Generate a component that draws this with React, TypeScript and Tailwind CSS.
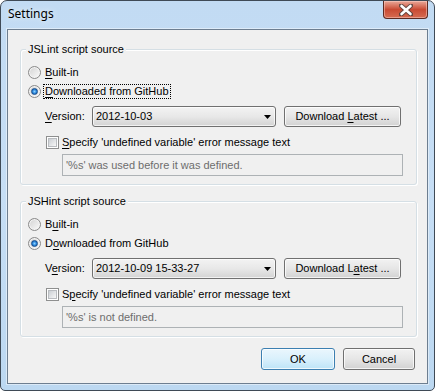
import type { ReactNode } from "react";

const font = "font-['Liberation_Sans',Arial,sans-serif] text-[11px] text-black";

const Radio = ({ checked }: { checked?: boolean }) => (
  <span className="flex h-[13px] w-[13px] shrink-0 items-center justify-center rounded-full border border-[#8a8a8a] bg-linear-to-br from-[#d2d2d2] to-[#fbfbfb] shadow-[inset_0_0_0_1px_#f4f4f4]">
    {checked && (
      <span className="h-[7px] w-[7px] rounded-full border border-[#1a4e8c] bg-radial from-[#8fd3fb] via-[#2a8ae0] to-[#0c4a95]" />
    )}
  </span>
);

const Checkbox = () => (
  <span className="flex h-[13px] w-[13px] shrink-0 items-center justify-center border border-[#8e8f8f] bg-white">
    <span className="h-[9px] w-[9px] border border-[#b9bcc0] bg-linear-to-br from-[#cbcfd4] to-[#f7f7f7]" />
  </span>
);

const Combo = ({ value }: { value: string }) => (
  <div className="flex h-[21px] w-[184px] items-center justify-between rounded-[3px] border border-[#707070] bg-linear-to-b from-[#f3f3f3] via-[#e8e8e8] to-[#d3d3d3] pl-[3px] pr-[4px] shadow-[inset_0_0_0_1px_rgba(255,255,255,0.7)]">
    <span>{value}</span>
    <svg width="7" height="4" viewBox="0 0 7 4">
      <path d="M0 0h7L3.5 4z" fill="#000" />
    </svg>
  </div>
);

const Button = ({
  children,
  className = "",
  primary,
}: {
  children: ReactNode;
  className?: string;
  primary?: boolean;
}) => (
  <div
    className={`flex items-center justify-center rounded-[3px] border ${
      primary
        ? "border-[#3c7fb1] bg-linear-to-b from-[#eaf6fd] via-[#d9f0fc] to-[#bde4f7]"
        : "border-[#707070] bg-linear-to-b from-[#f2f2f2] via-[#e6e6e6] to-[#d2d2d2]"
    } shadow-[inset_0_0_0_1px_rgba(255,255,255,0.75)] ${className}`}
  >
    <span>{children}</span>
  </div>
);

const U = ({ children }: { children: ReactNode }) => (
  <span className="underline underline-offset-[2px]">{children}</span>
);

type GroupProps = {
  title: string;
  built: ReactNode;
  downloaded: ReactNode;
  focused?: boolean;
  version: ReactNode;
  versionValue: string;
  latest: ReactNode;
  specify: ReactNode;
  message: string;
};

const GroupBox = (p: GroupProps) => (
  <div className="relative rounded-[3px] border border-[#d5dfe5] pl-[7px] pr-[14px] pt-[13px] pb-[8px] shadow-[inset_1px_1px_0_#fff,1px_1px_0_#fff]">
    <span className="absolute -top-[8px] left-[5px] bg-[#f0f0f0] px-[2px] leading-[14px]">
      {p.title}
    </span>
    <div className="flex h-[19px] items-center gap-[4px]">
      <Radio />
      <span>{p.built}</span>
    </div>
    <div className="flex h-[19px] items-center gap-[4px]">
      <Radio checked />
      <span
        className={
          p.focused ? "-mx-[2px] border border-dotted border-black px-[1px] leading-[13px]" : ""
        }
      >
        {p.downloaded}
      </span>
    </div>
    <div className="mt-[5px] flex h-[21px] items-center">
      <span className="ml-[17px] w-[47px]">{p.version}</span>
      <Combo value={p.versionValue} />
      <Button className="ml-[8px] h-[21px] w-[117px]">{p.latest}</Button>
    </div>
    <div className="mt-[7px] flex h-[16px] items-center gap-[3px] pl-[18px]">
      <Checkbox />
      <span>{p.specify}</span>
    </div>
    <div className="ml-[34px] mt-[4px] flex h-[22px] w-[341px] items-center border border-[#adb2b5] pl-[3px] text-[#6d6d6d]">
      {p.message}
    </div>
  </div>
);

export default function App() {
  return (
    <div
      className={`${font} flex h-[391px] w-[435px] flex-col rounded-t-[7px] rounded-b-[5px] border border-[#3f4a56] bg-linear-to-b from-[#c2dbf3] via-[#c6def5] to-[#bcd8f1]`}
    >
      <div className="flex h-[28px] shrink-0 items-start justify-between">
        <span className="ml-[7px] mt-[5px] font-['Noto_Sans',sans-serif] text-[12px] leading-[16px] text-[#000] [text-shadow:0_0_6px_rgba(255,255,255,0.9)]">
          Settings
        </span>
        <div className="mr-[6px] flex h-[18px] w-[45px] items-center justify-center rounded-b-[4px] border border-t-0 border-[#5c2a22] bg-linear-to-b from-[#e9a899] via-[#c94a33] to-[#d66b52] shadow-[inset_0_0_0_1px_rgba(255,220,210,0.45)]">
          <svg width="14" height="12" viewBox="0 0 14 12">
            <path d="M2 1.5l10 9M12 1.5l-10 9" stroke="#3a3a3a" strokeWidth="4.5" strokeLinecap="round" opacity="0.7" />
            <path d="M2.5 2l9 8M11.5 2l-9 8" stroke="#fff" strokeWidth="2.6" strokeLinecap="round" />
          </svg>
        </div>
      </div>
      <div className="mx-[6px] flex flex-1 flex-col border border-[#6d7e90] bg-[#f0f0f0] pl-[12px] pr-[10px] pt-[19px] shadow-[0_0_0_1px_rgba(255,255,255,0.45)]">
        <GroupBox
          title="JSLint script source"
          built={<><U>B</U>uilt-in</>}
          downloaded={<><U>D</U>ownloaded from GitHub</>}
          focused
          version={<><U>V</U>ersion:</>}
          versionValue="2012-10-03"
          latest={<>Download <U>L</U>atest ...</>}
          specify={<><U>S</U>pecify 'undefined variable' error message text</>}
          message="'%s' was used before it was defined."
        />
        <div className="h-[16px]" />
        <GroupBox
          title="JSHint script source"
          built={<>B<U>u</U>ilt-in</>}
          downloaded={<>D<U>o</U>wnloaded from GitHub</>}
          version={<>V<U>e</U>rsion:</>}
          versionValue="2012-10-09 15-33-27"
          latest={<>Download L<U>a</U>test ...</>}
          specify={<>S<U>p</U>ecify 'undefined variable' error message text</>}
          message="'%s' is not defined."
        />
        <div className="mt-[11px] flex justify-end gap-[8px] pr-[2px]">
          <Button primary className="h-[22px] w-[74px]">OK</Button>
          <Button className="h-[22px] w-[72px]">Cancel</Button>
        </div>
      </div>
      <div className="h-[6px] shrink-0" />
    </div>
  );
}
